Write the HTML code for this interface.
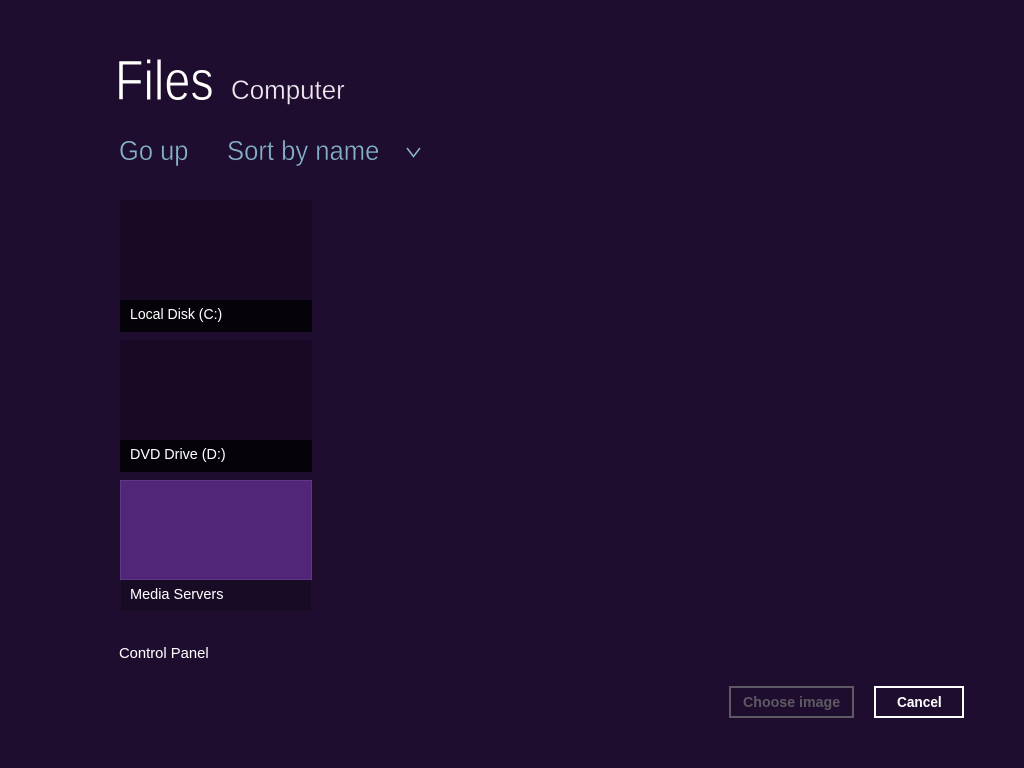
<!DOCTYPE html>
<html lang="en">
<head>
<meta charset="utf-8">
<title>Files</title>
<style>
html,body{margin:0;padding:0;width:1024px;height:768px;overflow:hidden;background:#1e0d2e;font-family:"Liberation Sans",sans-serif;}
.t{position:absolute;white-space:nowrap;transform-origin:0 0;line-height:1;}
.b{position:absolute;box-sizing:border-box;}
</style>
</head>
<body>
<div class="t" style="left:115px;top:53px;font-size:57px;color:#fff;-webkit-text-stroke:1px #1e0d2e;transform:scaleX(.82);">Files</div>
<div class="t" style="left:231px;top:77px;font-size:27px;color:#efeaf2;-webkit-text-stroke:.4px #1e0d2e;transform:scaleX(.96);">Computer</div>
<div class="t" style="left:119px;top:137px;font-size:28px;color:#85b0c9;-webkit-text-stroke:.45px #1e0d2e;transform:scaleX(.91);">Go up</div>
<div class="t" style="left:227px;top:137px;font-size:28px;color:#85b0c9;-webkit-text-stroke:.45px #1e0d2e;transform:scaleX(.915);">Sort by name</div>
<svg class="b" style="left:400px;top:140px" width="30" height="24" viewBox="0 0 30 24"><path d="M7 8 L13.500 16.500 L20 8" fill="none" stroke="#8fb8d0" stroke-width="1.500"/></svg>

<div class="b" style="left:120px;top:200px;width:192px;height:100px;background:#180a24;"></div>
<div class="b" style="left:120px;top:300px;width:192px;height:32px;background:#05020a;"></div>
<div class="t" style="left:130px;top:308px;font-size:14.500px;color:#fff;transform:scaleX(.97);">Local Disk (C:)</div>

<div class="b" style="left:120px;top:340px;width:192px;height:100px;background:#180a24;"></div>
<div class="b" style="left:120px;top:440px;width:192px;height:32px;background:#05020a;"></div>
<div class="t" style="left:130px;top:448px;font-size:14.500px;color:#fff;transform:scaleX(.99);">DVD Drive (D:)</div>

<div class="b" style="left:120px;top:480px;width:192px;height:100px;background:#512678;border:1px solid #5f3886;"></div>
<div class="b" style="left:120px;top:580px;width:192px;height:32px;background:#180b26;border:1px solid #1d1029;border-top:0;"></div>
<div class="t" style="left:130px;top:588px;font-size:14.500px;color:#fff;">Media Servers</div>

<div class="t" style="left:119px;top:647px;font-size:14.500px;color:#fff;transform:scaleX(1.02);">Control Panel</div>

<div class="b" style="left:729px;top:686px;width:125px;height:32px;border:2px solid #5e5a63;"></div>
<div class="t" style="left:743px;top:696px;font-size:14.500px;font-weight:bold;color:#5e5a63;transform:scaleX(.98);">Choose image</div>
<div class="b" style="left:874px;top:686px;width:90px;height:32px;border:2px solid #fff;"></div>
<div class="t" style="left:897px;top:696px;font-size:14.500px;font-weight:bold;color:#fff;transform:scaleX(.94);">Cancel</div>
</body>
</html>
